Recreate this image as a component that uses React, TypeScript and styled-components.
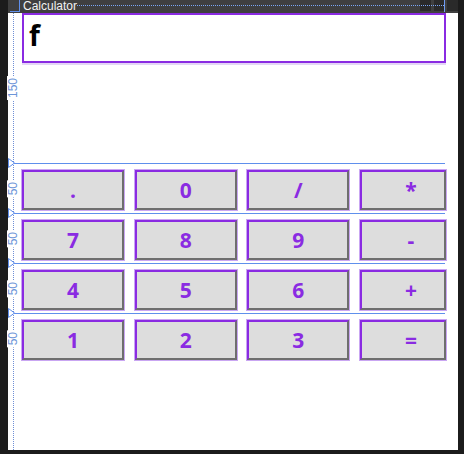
import React from "react";
import styled, { createGlobalStyle } from "styled-components";

const GlobalStyle = createGlobalStyle`
  html, body { margin: 0; padding: 0; background: #1c1c1c; }
  #root { width: 464px; height: 454px; }
`;

const BLUE = "#5f8fec";
const PURPLE = "#8a2be2";

const Screen = styled.div`
  width: 464px;
  height: 454px;
  box-sizing: border-box;
  padding-left: 8px;
  background: #1c1c1c;
  display: flex;
  align-items: flex-start;
  overflow: hidden;
`;

const Window = styled.div`
  width: 450px;
  height: 450px;
  display: flex;
  flex-direction: column;
`;

const TitleBar = styled.div`
  height: 13px;
  flex: none;
  background: #3f3f3f;
  display: flex;
  align-items: flex-start;
  position: relative;
`;

const Corner = styled.div`
  width: 12px;
  height: 13px;
  flex: none;
  position: relative;
  &::before {
    content: "";
    position: absolute;
    left: 2px;
    top: 0;
    width: 10px;
    height: 12px;
    box-sizing: border-box;
    border-right: 1px solid ${BLUE};
    border-bottom: 1px solid ${BLUE};
  }
`;

const Title = styled.span`
  margin-left: 3px;
  font-family: "Liberation Sans", Arial, sans-serif;
  font-size: 12px;
  line-height: 12px;
  color: #f2f2f2;
  white-space: nowrap;
`;

const Spacer = styled.div`
  flex: 1;
`;

const WinButtons = styled.div`
  display: flex;
  gap: 3px;
`;

const WinButton = styled.div<{ $w: number }>`
  width: ${(p) => p.$w}px;
  height: 11px;
  background: #2a2a2a;
`;

const TitleGuide = styled.div`
  position: absolute;
  left: 69px;
  top: 5px;
  width: 367px;
  height: 0;
  border-top: 1px dotted #7aa6f6;
`;

const TitleTick = styled.div`
  position: absolute;
  left: 436px;
  top: 0;
  width: 1px;
  height: 12px;
  background: #6f9cf2;
`;

const Body = styled.div`
  flex: 1;
  background: #ffffff;
  position: relative;
  display: flex;
  flex-direction: column;
`;

const VGuide = styled.div`
  position: absolute;
  left: 5px;
  top: 0;
  bottom: 0;
  border-left: 1px dotted #6f8fd6;
`;

const TopSection = styled.div`
  height: 150px;
  display: flex;
  flex: none;
`;

const Gutter = styled.div`
  width: 14px;
  flex: none;
  position: relative;
  display: flex;
  align-items: center;
  justify-content: center;
  padding-right: 1px;
  box-sizing: border-box;
`;

const RulerLabel = styled.span`
  position: relative;
  z-index: 1;
  writing-mode: vertical-rl;
  transform: rotate(180deg);
  font-family: "Liberation Sans", Arial, sans-serif;
  font-size: 12px;
  line-height: 13px;
  color: #6c95d8;
  background: #ffffff;
  padding: 2px 0;
  margin-left: -2px;
`;

const Display = styled.div`
  width: 424px;
  height: 50px;
  box-sizing: border-box;
  border: 2px solid ${PURPLE};
  box-shadow: 0 2px 0 #e4d6f6;
  padding: 0 5px;
  font-family: "Open Sans", "Noto Sans", sans-serif;
  font-weight: 700;
  font-size: 28px;
  line-height: 40px;
  color: #000000;
`;

const Row = styled.div`
  width: 437px;
  height: 50px;
  flex: none;
  box-sizing: border-box;
  border-top: 1px solid ${BLUE};
  display: flex;
`;

const Marker = styled.svg`
  position: absolute;
  left: 0;
  top: -6px;
  z-index: 2;
`;

const Cells = styled.div`
  width: 424px;
  display: grid;
  grid-template-columns: 102px 102px 102px 86px;
  column-gap: 10.67px;
  align-items: start;
  padding: 6px 0 0 0;
  box-sizing: border-box;
`;

const Key = styled.div<{ $clipped?: boolean }>`
  height: 40px;
  box-sizing: border-box;
  background: #dddddd;
  border: 2px solid;
  border-color: ${PURPLE} #6e6e6e #6e6e6e ${PURPLE};
  box-shadow: 0 0 0 1px #c9a6f2;
  display: flex;
  align-items: center;
  justify-content: center;
  padding-left: ${(p) => (p.$clipped ? 16 : 0)}px;
  font-family: "Open Sans", "Noto Sans", sans-serif;
  font-weight: 700;
  font-size: 21px;
  color: ${PURPLE};
`;

const rows = [
  [".", "0", "/", "*"],
  ["7", "8", "9", "-"],
  ["4", "5", "6", "+"],
  ["1", "2", "3", "="],
];

export default function App() {
  return (
    <>
      <GlobalStyle />
      <Screen>
        <Window>
          <TitleBar>
            <Corner />
            <Title>Calculator</Title>
            <Spacer />
            <WinButtons>
              <WinButton $w={11} />
              <WinButton $w={10} />
              <WinButton $w={11} />
            </WinButtons>
            <TitleGuide />
            <TitleTick />
          </TitleBar>
          <Body>
            <VGuide />
            <TopSection>
              <Gutter>
                <RulerLabel>150</RulerLabel>
              </Gutter>
              <Display>f</Display>
            </TopSection>
            {rows.map((r, i) => (
              <Row key={i}>
                <Gutter>
                  <Marker width="7" height="10" viewBox="0 0 7 10">
                    <polygon points="0.5,0.5 6.5,5 0.5,9.5" fill="#ffffff" stroke={BLUE} strokeWidth="1" />
                  </Marker>
                  <RulerLabel>50</RulerLabel>
                </Gutter>
                <Cells>
                  {r.map((k, j) => (
                    <Key key={k} $clipped={j === 3}>
                      {k}
                    </Key>
                  ))}
                </Cells>
              </Row>
            ))}
          </Body>
        </Window>
      </Screen>
    </>
  );
}
